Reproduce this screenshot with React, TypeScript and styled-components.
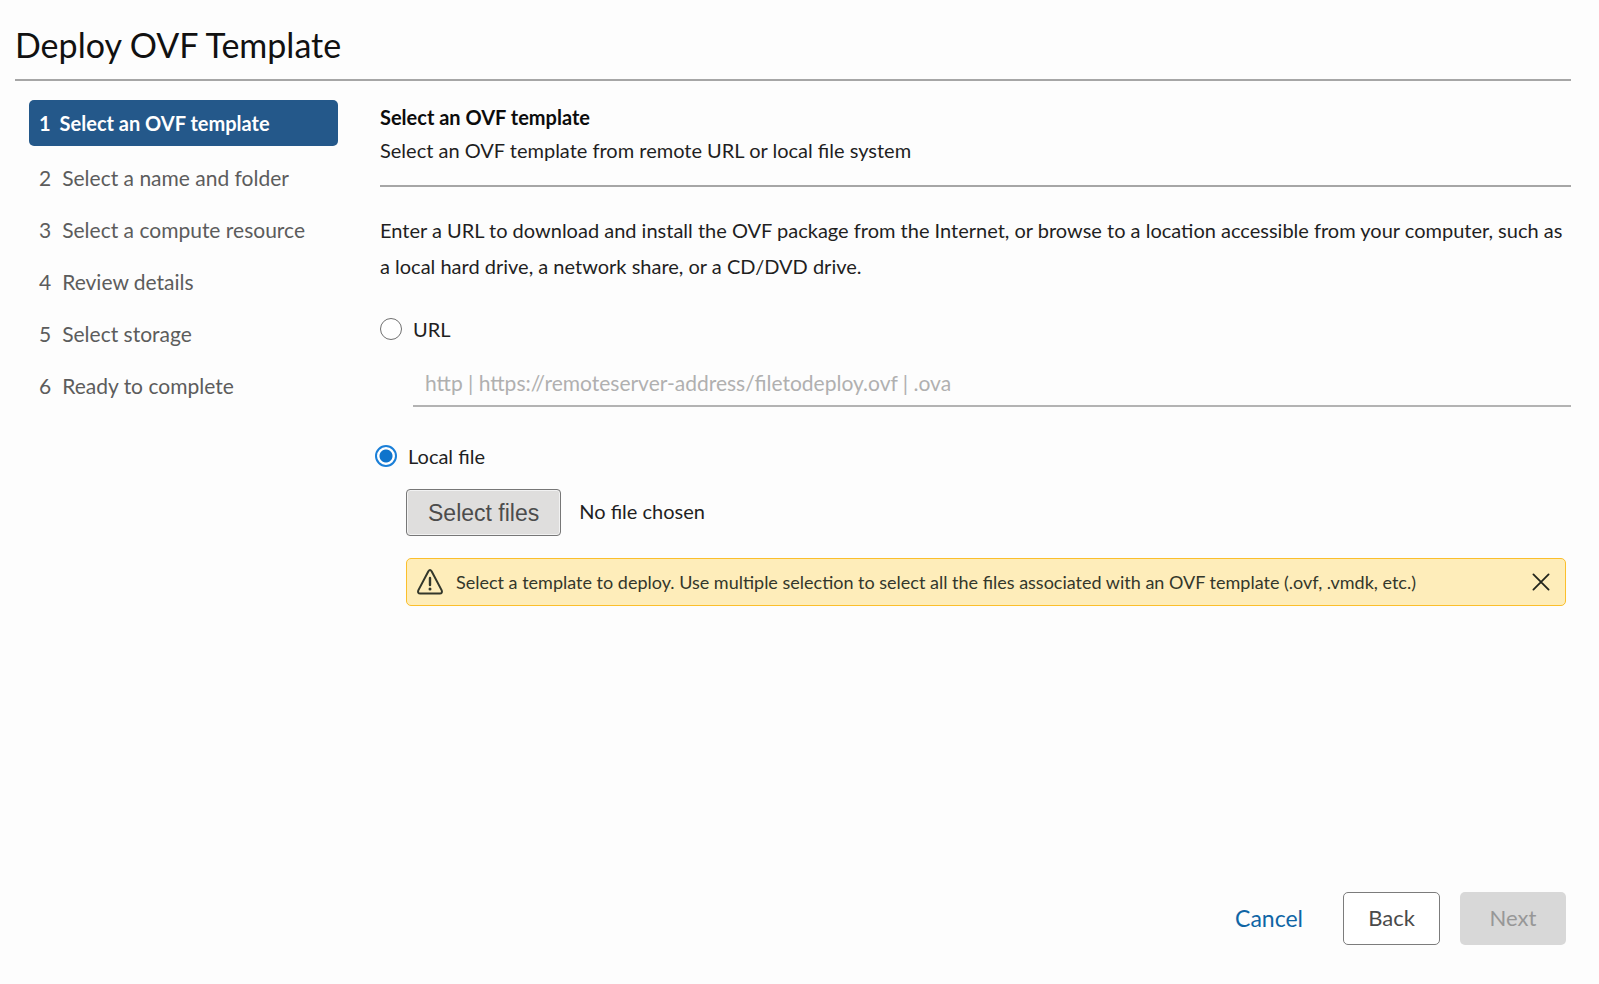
import React, { useState } from "react";
import styled, { createGlobalStyle, css } from "styled-components";

const GlobalStyle = createGlobalStyle`
  *, *::before, *::after { box-sizing: border-box; }
  body {
    margin: 0;
    background: #fdfdfd;
    color: #1f1f1f;
    font-family: Lato, "Open Sans", sans-serif;
    font-size: 20px;
    line-height: 36px;
  }
  button, input { font: inherit; }
`;

const Wizard = styled.form`
  display: flex;
  flex-direction: column;
  min-height: 100vh;
  padding: 23px 28px 39px 15px;
`;

const Header = styled.header`
  padding-bottom: 12px;
  border-bottom: 2px solid #a6a6a6;
`;

const Title = styled.h1`
  margin: 0;
  font-size: 34px;
  font-weight: 400;
  line-height: 44px;
  color: #111;
`;

const Body = styled.div`
  display: grid;
  grid-template-columns: 309px minmax(0, 1fr);
  column-gap: 37px;
  flex: 1;
  padding: 19px 0 0 14px;
`;

const Steps = styled.ol`
  margin: 0;
  padding: 0;
  list-style: none;
`;

const Step = styled.button<{ $active?: boolean }>`
  display: flex;
  align-items: center;
  gap: 11px;
  width: 100%;
  height: 52px;
  padding: 0 10px;
  border: 0;
  background: none;
  color: #5c5c5c;
  font-size: 21px;
  text-align: left;
  ${({ $active }) =>
    $active &&
    css`
      height: 46px;
      margin-bottom: 6px;
      gap: 9px;
      border-radius: 5px;
      background: #24588a;
      color: #fff;
      font-size: 20px;
      font-weight: 700;
    `}
`;

const Content = styled.main`
  display: flex;
  flex-direction: column;
`;

const Intro = styled.section`
  margin-left: 5px;
  padding-bottom: 19px;
  border-bottom: 2px solid #a6a6a6;
`;

const SectionTitle = styled.h2`
  margin: 0;
  font-size: 20px;
  font-weight: 700;
  line-height: 34px;
  color: #0c0c0c;
`;

const Subtitle = styled.p`
  margin: 0;
  line-height: 32px;
`;

const Help = styled.p`
  margin: 25px 0 0 5px;
`;

const Choice = styled.div<{ $inset?: boolean }>`
  display: flex;
  align-items: center;
  gap: 11px;
  margin-left: ${({ $inset }) => ($inset ? 5 : 0)}px;
`;

const Radio = styled.input.attrs({ type: "radio" })`
  appearance: none;
  flex: none;
  width: 22px;
  height: 22px;
  margin: 0;
  border: 1px solid #707070;
  border-radius: 50%;
  background: #fff;
  &:checked {
    border: 2px solid #1a7fd8;
    background: radial-gradient(circle, #0f74cc 6px, #fff 7px);
  }
`;

const Options = styled.fieldset`
  min-width: 0;
  margin: 27px 0 0;
  padding: 0;
  border: 0;
`;

const UrlInput = styled.input`
  display: block;
  width: calc(100% - 38px);
  height: 46px;
  margin: 14px 0 31px 38px;
  padding: 0 12px 2px;
  border: 0;
  border-bottom: 2px solid #b3b3b3;
  background: none;
  font-size: 21px;
  &::placeholder { color: #b0b0b0; opacity: 1; }
`;

const FileRow = styled.div`
  display: flex;
  align-items: flex-start;
  gap: 18px;
  margin: 15px 0 22px 31px;
  line-height: 44px;
`;

const FileButton = styled.button`
  height: 47px;
  padding: 0 21px;
  border: 1px solid #777;
  border-radius: 4px;
  box-shadow: inset 0 0 0 1px #f2f2f2;
  background: #dfdedd;
  color: #4c4c4c;
  font-family: "Liberation Sans", Arial, sans-serif;
  font-size: 23px;
`;

const Alert = styled.div`
  display: flex;
  align-items: center;
  min-height: 48px;
  margin: 0 5px 0 31px;
  padding: 0 15px 0 10px;
  border: 1px solid #fbbf2c;
  border-radius: 5px;
  background: #feedba;
  color: #33372b;
  font-size: 18px;
`;

const AlertText = styled.span`
  flex: 1;
  margin-left: 13px;
`;

const CloseButton = styled.button`
  display: flex;
  padding: 0;
  border: 0;
  background: none;
  color: #22251c;
`;

const Footer = styled.footer`
  display: flex;
  justify-content: flex-end;
  gap: 20px;
  padding-right: 5px;
`;

const FooterButton = styled.button<{ $kind: "link" | "outline" | "solid" }>`
  height: 53px;
  padding: 0 20px 2px;
  border: 0;
  border-radius: 5px;
  background: none;
  color: #0f65a5;
  font-size: 23px;
  ${({ $kind }) =>
    $kind === "outline" &&
    css`
      width: 97px;
      border: 1px solid #7c7c7c;
      background: #fff;
      color: #4a4a4a;
      font-size: 22px;
    `}
  ${({ $kind }) =>
    $kind === "solid" &&
    css`
      width: 106px;
      background: #d8d8d8;
      color: #979797;
      font-size: 22px;
    `}
`;

const steps = [
  "Select an OVF template",
  "Select a name and folder",
  "Select a compute resource",
  "Review details",
  "Select storage",
  "Ready to complete",
];

export default function App() {
  const [source, setSource] = useState("local");
  const [alertOpen, setAlertOpen] = useState(true);

  return (
    <>
      <GlobalStyle />
      <Wizard onSubmit={(e) => e.preventDefault()}>
        <Header>
          <Title>Deploy OVF Template</Title>
        </Header>
        <Body>
          <nav>
            <Steps>
              {steps.map((label, i) => (
                <li key={label}>
                  <Step type="button" $active={i === 0} aria-current={i === 0 ? "step" : undefined}>
                    <span>{i + 1}</span>
                    <span>{label}</span>
                  </Step>
                </li>
              ))}
            </Steps>
          </nav>
          <Content>
            <Intro>
              <SectionTitle>Select an OVF template</SectionTitle>
              <Subtitle>Select an OVF template from remote URL or local file system</Subtitle>
            </Intro>
            <Help>
              Enter a URL to download and install the OVF package from the Internet, or browse to a
              location accessible from your computer, such as a local hard drive, a network share, or
              a CD/DVD drive.
            </Help>
            <Options aria-label="Template source">
              <Choice $inset>
                <Radio id="url" name="source" checked={source === "url"} onChange={() => setSource("url")} />
                <label htmlFor="url">URL</label>
              </Choice>
              <UrlInput
                type="text"
                aria-label="Remote URL"
                placeholder="http | https://remoteserver-address/filetodeploy.ovf | .ova"
              />
              <Choice>
                <Radio id="local" name="source" checked={source === "local"} onChange={() => setSource("local")} />
                <label htmlFor="local">Local file</label>
              </Choice>
              <FileRow>
                <FileButton type="button">Select files</FileButton>
                <span>No file chosen</span>
              </FileRow>
            </Options>
            {alertOpen && (
              <Alert role="alert">
                <svg width="26" height="26" viewBox="0 0 26 26" fill="none" stroke="currentColor" strokeWidth="2" strokeLinecap="round" strokeLinejoin="round" aria-hidden="true">
                  <path d="M11.4 2.2 1.3 21.4Q.4 24.6 3.2 24.6H22.8Q25.6 24.6 24.7 21.4L14.6 2.2Q13-.1 11.4 2.2Z" />
                  <path d="M13 9v7" strokeWidth="2.4" />
                  <circle cx="13" cy="20" r="1.5" fill="currentColor" stroke="none" />
                </svg>
                <AlertText>
                  Select a template to deploy. Use multiple selection to select all the files associated
                  with an OVF template (.ovf, .vmdk, etc.)
                </AlertText>
                <CloseButton type="button" aria-label="Close" onClick={() => setAlertOpen(false)}>
                  <svg width="18" height="18" viewBox="0 0 18 18" stroke="currentColor" strokeWidth="1.8" strokeLinecap="round" aria-hidden="true">
                    <path d="M1.4 1.4l15.2 15.2M16.6 1.4L1.4 16.6" />
                  </svg>
                </CloseButton>
              </Alert>
            )}
          </Content>
        </Body>
        <Footer>
          <FooterButton type="button" $kind="link">Cancel</FooterButton>
          <FooterButton type="button" $kind="outline">Back</FooterButton>
          <FooterButton type="submit" $kind="solid" disabled>Next</FooterButton>
        </Footer>
      </Wizard>
    </>
  );
}
